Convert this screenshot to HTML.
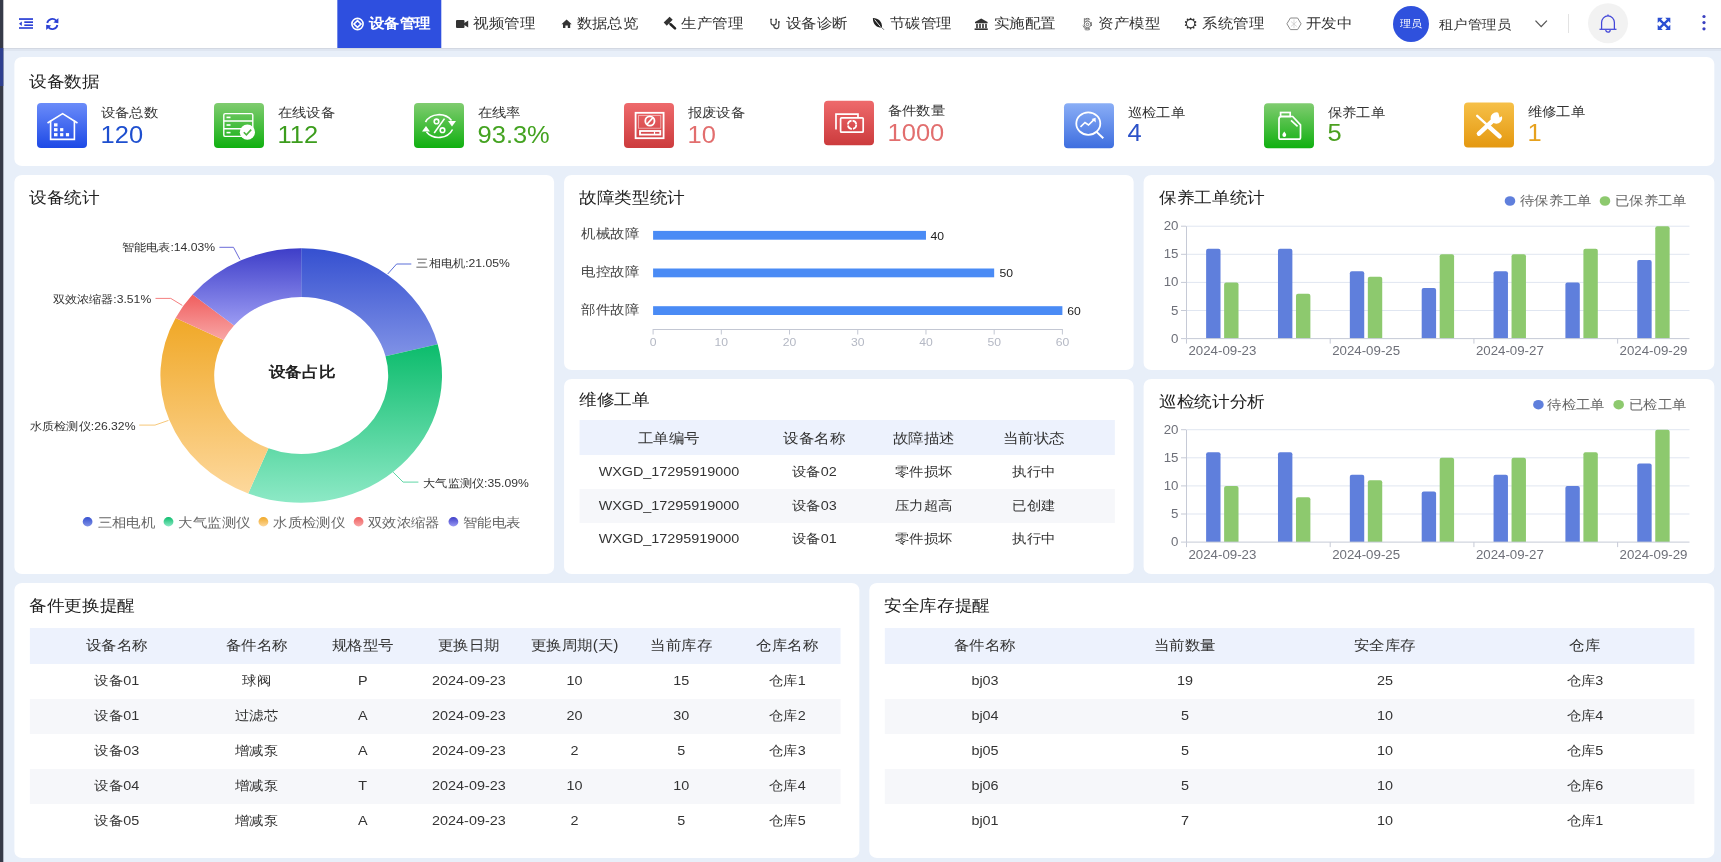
<!DOCTYPE html>
<html><head><meta charset="utf-8">
<style>
html,body{margin:0;padding:0;width:1721px;height:862px;overflow:hidden;background:#e8eff9;}
body{font-family:"Liberation Sans",sans-serif;color:#333;}
#root{position:absolute;left:0;top:0;width:1556.06px;height:862px;transform-origin:0 0;transform:scaleX(1.106);background:#e8eff9;}
.a{position:absolute;white-space:nowrap;}
.card{position:absolute;background:#fff;border-radius:7px;}
.ttl{position:absolute;font-size:16px;line-height:20px;color:#222;margin-top:0.5px;}
.c{text-align:center;}
#ov{position:absolute;left:0;top:0;}
.nav{font-size:14px;line-height:20px;color:#333;top:13px;}
.lab{font-size:13px;line-height:18px;color:#333;}
.num{font-size:23px;line-height:26px;}
.pl{font-size:11px;line-height:14px;color:#333;}
.lg{font-size:13px;line-height:16px;color:#666;}
.ax{font-size:11px;line-height:14px;color:#b4b8c4;}
.ax2{font-size:12px;line-height:14px;color:#6e7079;}
.th{font-size:14px;line-height:18px;color:#333;}
.td{font-size:13px;line-height:18px;color:#333;}
.fl{font-size:13px;line-height:18px;color:#444;}
.vl{font-size:11px;line-height:14px;color:#222;}
</style></head><body>
<div id="root">
<!-- header -->
<div class="a" style="left:0;top:0;width:1556.06px;height:48px;background:#fff;"></div>
<div class="a" style="left:0;top:48px;width:1556.06px;height:1px;background:#d3d8e2;"></div>
<div class="a" style="left:0;top:49px;width:1556.06px;height:2px;background:#dfe6f1;"></div>
<div class="a" style="left:304.70px;top:0;width:94.03px;height:48px;background:#2e4fdf;"></div>
<div class="a" style="left:0;top:0;width:3.44px;height:862px;background:#363a48;"></div>
<div class="a" style="left:0;top:48px;width:3.44px;height:38px;background:#2e3f8f;"></div>

<!-- cards -->
<div class="card" style="left:12.66px;top:57px;width:1537.07px;height:109px;"></div>
<div class="card" style="left:12.66px;top:175px;width:488.25px;height:399px;"></div>
<div class="card" style="left:509.95px;top:175px;width:515.37px;height:195px;"></div>
<div class="card" style="left:509.95px;top:379px;width:515.37px;height:195px;"></div>
<div class="card" style="left:1034.36px;top:175px;width:515.37px;height:195px;"></div>
<div class="card" style="left:1034.36px;top:379px;width:515.37px;height:195px;"></div>
<div class="card" style="left:12.66px;top:583px;width:764.01px;height:275px;"></div>
<div class="card" style="left:785.71px;top:583px;width:764.01px;height:275px;"></div>

<!-- titles -->
<div class="a ttl" style="left:26.22px;top:71px;">设备数据</div>
<div class="a ttl" style="left:26.22px;top:187px;">设备统计</div>
<div class="a ttl" style="left:523.51px;top:187px;">故障类型统计</div>
<div class="a ttl" style="left:1047.92px;top:187px;">保养工单统计</div>
<div class="a ttl" style="left:523.51px;top:389px;">维修工单</div>
<div class="a ttl" style="left:1047.92px;top:391px;">巡检统计分析</div>
<div class="a ttl" style="left:26.22px;top:595px;">备件更换提醒</div>
<div class="a ttl" style="left:799.28px;top:595px;">安全库存提醒</div>

<svg id="ov" width="1556.06" height="862" viewBox="0 0 1721 862" preserveAspectRatio="none" style="position:absolute;left:0;top:0">
<defs>
<linearGradient id="gBlue" x1="0" y1="0" x2="0" y2="1"><stop offset="0" stop-color="#6b8cf9"/><stop offset="1" stop-color="#1d49e6"/></linearGradient>
<linearGradient id="gGreen" x1="0" y1="0" x2="0" y2="1"><stop offset="0" stop-color="#80cc70"/><stop offset="1" stop-color="#10b010"/></linearGradient>
<linearGradient id="gRed" x1="0" y1="0" x2="0" y2="1"><stop offset="0" stop-color="#ee6a6c"/><stop offset="1" stop-color="#cc3b3d"/></linearGradient>
<linearGradient id="gBlue2" x1="0" y1="0" x2="0" y2="1"><stop offset="0" stop-color="#8aaef6"/><stop offset="1" stop-color="#3e6edf"/></linearGradient>
<linearGradient id="gOrange" x1="0" y1="0" x2="0" y2="1"><stop offset="0" stop-color="#f6c048"/><stop offset="1" stop-color="#e49810"/></linearGradient>
</defs>
<!-- header icons -->
<g fill="#2a3fd5">
<rect x="19" y="18.2" width="14" height="1.7"/>
<rect x="24.3" y="21.3" width="8.7" height="1.7"/>
<rect x="24.3" y="24.4" width="8.7" height="1.6"/>
<rect x="19" y="27.2" width="14" height="1.6"/>
<path d="M21.8 21.4 L19 23.7 L21.8 26 Z"/>
</g>
<g fill="none" stroke="#2a3fd5" stroke-width="1.8">
<path d="M47.2 23 A5.2 5.2 0 0 1 56.2 20.6"/>
<path d="M57.4 25 A5.2 5.2 0 0 1 48.4 27.4"/>
</g>
<g fill="#2a3fd5">
<path d="M58.4 18 L58.4 23.2 L53.4 22.6 Z"/>
<path d="M46.2 30 L46.2 24.8 L51.2 25.4 Z"/>
</g>
<!-- nav icons -->
<g fill="none" stroke="#fff" stroke-width="1.6">
<circle cx="357.5" cy="24" r="5.6"/>
<path d="M357.5 20.6 L361 24 L357.5 27.4 L354 24 Z"/>
</g>
<g fill="#333">
<rect x="456" y="20" width="8.5" height="8" rx="1"/>
<path d="M464 23.2 L468.2 20.4 L468.2 27.6 L464 24.8 Z"/>
<path d="M561.5 24.2 L566.6 19.6 L571.7 24.2 L570.2 24.2 L570.2 28 L567.8 28 L567.8 25.4 L565.4 25.4 L565.4 28 L563 28 L563 24.2 Z"/>
<path d="M672.7 19.8 L669.6 16.7 L663.7 22.6 L666.8 25.7 Z"/>
</g>
<path d="M670.6 24.3 L675 28.4" stroke="#222" stroke-width="2.6" stroke-linecap="round"/>
<path d="M669 22.6 L671.2 24.8" stroke="#222" stroke-width="1"/>
<g fill="#222">
<path d="M872.9 18 C878.5 18.3 882.3 21.5 882 27.6 C876.5 27.8 872.8 24.2 872.9 18 Z"/>
</g>
<path d="M874.6 19.5 L880.4 26.6" stroke="#fff" stroke-width="0.9"/>
<path d="M881.6 27.4 L884 29.8" stroke="#666" stroke-width="0.9"/>
<g fill="#333">
<path d="M975 22 L981.2 18.6 L987.6 22 L987.6 23.2 L975 23.2 Z"/>
<rect x="976.2" y="23.8" width="1.6" height="4.4"/><rect x="979.2" y="23.8" width="1.6" height="4.4"/><rect x="982.2" y="23.8" width="1.6" height="4.4"/><rect x="985.2" y="23.8" width="1.6" height="4.4"/>
<rect x="974.6" y="28.4" width="13.2" height="1.6"/>
</g>
<g fill="none" stroke="#444" stroke-width="1.2" stroke-linecap="round">
<path d="M771 19.4 L771 22.5 Q771 25 773.6 25.2 Q776.2 25 776.2 22.5 L776.2 19.4"/>
<path d="M773.6 25.2 Q774 28.5 776.5 28.6 Q778.8 28.5 778.8 26 L778.8 21.8"/>
</g>
<g fill="#444"><rect x="770.3" y="18.8" width="1.8" height="1.1"/><rect x="775.2" y="18.8" width="1.8" height="1.1"/><rect x="778" y="21.2" width="1.7" height="1.4"/></g>
<g fill="none" stroke="#666" stroke-width="0.9">
<ellipse cx="1087.4" cy="19.2" rx="2.3" ry="0.8"/>
<path d="M1084.4 18.2 L1084.4 22.5"/>
<circle cx="1087.5" cy="24.4" r="3.3"/>
<circle cx="1087.5" cy="24.4" r="1.3"/>
<ellipse cx="1087.4" cy="29.1" rx="2.6" ry="0.8"/>
<path d="M1083 25.5 L1084.8 28.4 M1091.2 22 L1091.5 26"/>
</g>
<g fill="none" stroke="#333" stroke-width="1.1">
<circle cx="1190.6" cy="23.6" r="4.2"/>
</g>
<g fill="#333">
<circle cx="1190.6" cy="18.6" r="0.9"/><circle cx="1193.6" cy="19.5" r="0.9"/><circle cx="1195.4" cy="22" r="0.9"/><circle cx="1195.4" cy="25.2" r="0.9"/><circle cx="1193.6" cy="27.7" r="0.9"/><circle cx="1190.6" cy="28.6" r="0.9"/><circle cx="1187.6" cy="27.7" r="0.9"/><circle cx="1185.8" cy="25.2" r="0.9"/><circle cx="1185.8" cy="22" r="0.9"/><circle cx="1187.6" cy="19.5" r="0.9"/>
</g>
<g fill="none" stroke="#8a8a8a" stroke-width="1">
<path d="M1290.4 18 L1297.6 18 L1301.1 23.8 L1297.6 29.6 L1290.4 29.6 L1286.9 23.8 Z"/>
</g>
<g fill="none" stroke="#c8c8c8" stroke-width="0.7">
<path d="M1291 21.5 L1296.8 26.5 M1296.8 21.5 L1291 26.5 M1294 19.5 L1294 28"/>
</g>
<!-- right header -->
<circle cx="1411" cy="24" r="18" fill="#2f51dd"/>
<path d="M1535.5 20.6 L1541.2 26.6 L1546.9 20.6" fill="none" stroke="#555" stroke-width="1.3"/>
<rect x="1568" y="14" width="1" height="19" fill="#e3e3e3"/>
<circle cx="1608" cy="23.2" r="20" fill="#f2f2f2"/>
<g fill="none" stroke="#4347d9" stroke-width="1.25">
<path d="M1601.6 29 L1601.6 22.5 A6.4 6.6 0 0 1 1614.4 22.5 L1614.4 29"/>
<path d="M1599.5 29.3 L1616.5 29.3"/>
<path d="M1605.8 30 A2.2 2.2 0 0 0 1610.2 30"/>
<path d="M1608 14.6 L1608 16"/>
</g>
<g fill="#2b4fd2">
<path d="M1657.7 17.8 L1662.8 17.8 L1657.7 22.9 Z"/>
<path d="M1670.3 17.8 L1670.3 22.9 L1665.2 17.8 Z"/>
<path d="M1657.7 29.9 L1657.7 24.8 L1662.8 29.9 Z"/>
<path d="M1670.3 29.9 L1665.2 29.9 L1670.3 24.8 Z"/>
</g>
<path d="M1659.5 19.6 L1668.5 28.1 M1668.5 19.6 L1659.5 28.1" stroke="#2b4fd2" stroke-width="2.3"/>
<g fill="#3a3fc0">
<circle cx="1704" cy="16.5" r="1.6"/><circle cx="1704" cy="22.6" r="1.6"/><circle cx="1704" cy="28.8" r="1.6"/>
</g>

<rect x="37" y="103" width="50" height="45" rx="4" fill="url(#gBlue)"/>
<rect x="214" y="103" width="50" height="45" rx="4" fill="url(#gGreen)"/>
<rect x="414" y="103" width="50" height="45" rx="4" fill="url(#gGreen)"/>
<rect x="624" y="103" width="50" height="45" rx="4" fill="url(#gRed)"/>
<rect x="824" y="100.7" width="50" height="44.5" rx="4" fill="url(#gRed)"/>
<rect x="1064" y="103.3" width="50" height="45" rx="4" fill="url(#gBlue2)"/>
<rect x="1264" y="103.3" width="50" height="45" rx="4" fill="url(#gGreen)"/>
<rect x="1464" y="102.5" width="50" height="45" rx="4" fill="url(#gOrange)"/>
<!-- icon1 house -->
<g fill="none" stroke="#fff" stroke-width="1.6" stroke-linejoin="miter">
<path d="M47.5 123 L62.6 113.6 L77.5 123"/>
<path d="M50.6 120.6 L50.6 139.4 L74.4 139.4 L74.4 120.6"/>
</g>
<g fill="#fff">
<rect x="54" y="123.3" width="3.5" height="3.2"/><rect x="54" y="128.1" width="3.5" height="3.2"/><rect x="54" y="133.1" width="3.5" height="3.2"/>
<rect x="60.1" y="128.1" width="3.2" height="3.2"/><rect x="60.1" y="133.1" width="3.2" height="3.2"/>
<rect x="65.9" y="133.1" width="3.2" height="3.2"/>
</g>
<!-- icon2 server check -->
<g fill="none" stroke="#fff" stroke-width="1.4">
<rect x="223.8" y="113.6" width="29" height="22.8" rx="1.5"/>
<path d="M223.8 121 L252.8 121 M223.8 128.8 L252.8 128.8"/>
</g>
<g fill="#fff"><rect x="226.5" y="116.6" width="4" height="1.6"/><rect x="226.5" y="124.2" width="4" height="1.6"/><rect x="226.5" y="131.8" width="4" height="1.6"/></g>
<circle cx="247.4" cy="132.2" r="7.6" fill="#fff"/>
<circle cx="247.4" cy="132.2" r="6.4" fill="#fff" stroke="#5fbf50" stroke-width="0"/>
<path d="M243.8 132.3 L246.4 134.9 L251.2 129.6" fill="none" stroke="#4fb440" stroke-width="1.6"/>
<!-- icon3 percent cycle -->
<g fill="none" stroke="#fff" stroke-width="1.6">
<path d="M425.5 122 A15 13 0 0 1 451.5 120.5"/>
<path d="M452.5 129.5 A15 13 0 0 1 426.5 132"/>
<circle cx="436.5" cy="121.4" r="2.3"/><circle cx="442.5" cy="130.2" r="2.3"/>
<path d="M444.5 118.6 L434.2 133"/>
</g>
<g fill="#fff">
<path d="M448 121 L456 121 L452 126.5 Z"/>
<path d="M422 131.5 L430 131.5 L426 126 Z"/>
</g>
<!-- icon4 scrap -->
<g fill="none" stroke="#fff" stroke-width="1.8">
<rect x="635.6" y="112.8" width="28" height="25.4"/>
<circle cx="649.9" cy="121" r="4.6"/>
<path d="M652.6 118 L647.2 124"/>
<rect x="640" y="131" width="20.3" height="3.6"/>
</g>
<rect x="638.4" y="115.6" width="22.4" height="12.6" fill="none" stroke="#fff" stroke-width="0.8" opacity="0.6"/>
<path d="M654.5 131.5 L654.5 134" stroke="#fff" stroke-width="1.2"/>
<!-- icon5 spare -->
<g fill="none" stroke="#fff" stroke-width="1.7">
<path d="M836 129.5 L836 114.2 L858 114.2 L858 117"/>
<rect x="840.6" y="117.8" width="22.6" height="14.4" rx="1"/>
<circle cx="852.1" cy="124.8" r="4.2" stroke-dasharray="5.5 1.1"/>
</g>
<!-- icon6 search trend -->
<g fill="none" stroke="#fff" stroke-width="1.8">
<ellipse cx="1088.3" cy="123.6" rx="12" ry="11.2"/>
<path d="M1096.3 131.6 L1103.3 138.3" stroke-width="2"/>
<path d="M1080.5 126.8 L1085 122.5 L1088.5 125 L1094 119.6" stroke-width="1.6"/>
</g>
<path d="M1095.6 117.8 L1095.8 122.4 L1091.6 119 Z" fill="#fff"/>
<!-- icon7 jerrycan -->
<g fill="none" stroke="#fff" stroke-width="1.7">
<path d="M1279 122 L1279 137.5 Q1279 139.2 1280.8 139.2 L1298.8 139.2 Q1300.5 139.2 1300.5 137.5 L1300.5 124.8 L1292.7 116.5 L1281.4 116.5 Q1279 116.5 1279 119 Z"/>
<rect x="1280.6" y="112.5" width="9.6" height="4"/>
<path d="M1291 120.4 L1297.6 126.3"/>
</g>
<path d="M1284.3 131.6 Q1286.2 134 1286.2 135 A1.9 1.9 0 0 1 1282.4 135 Q1282.4 134 1284.3 131.6 Z" fill="#fff"/>
<!-- icon8 tools -->
<g stroke="#fff" stroke-linecap="round" fill="none">
<path d="M1477.2 115.8 L1486 123.8" stroke-width="2.4"/>
<path d="M1489.6 127.4 L1499.6 136.4" stroke-width="4.4"/>
<path d="M1479 133.6 L1492.6 120.8" stroke-width="4.6"/>
</g>
<mask id="wm" maskUnits="userSpaceOnUse" x="1480" y="100" width="40" height="40"><rect x="1480" y="100" width="40" height="40" fill="#fff"/><path d="M1497.6 110 L1499.6 117.4 L1508 113 L1506 106 Z" fill="#000"/></mask>
<circle cx="1496.4" cy="118" r="5.8" fill="#fff" mask="url(#wm)"/>
<!--CHARTS_BEGIN-->
<defs><linearGradient id="pg0" x1="0" y1="0" x2="0" y2="1"><stop offset="0" stop-color="#3550d0"/><stop offset="1" stop-color="#8092e6"/></linearGradient><linearGradient id="pg1" x1="0" y1="0" x2="0" y2="1"><stop offset="0" stop-color="#0cbc6c"/><stop offset="1" stop-color="#8de9c6"/></linearGradient><linearGradient id="pg2" x1="0" y1="0" x2="0" y2="1"><stop offset="0" stop-color="#f0a827"/><stop offset="1" stop-color="#fdd89c"/></linearGradient><linearGradient id="pg3" x1="0" y1="0" x2="0" y2="1"><stop offset="0" stop-color="#f05e5e"/><stop offset="1" stop-color="#f8a6a6"/></linearGradient><linearGradient id="pg4" x1="0" y1="0" x2="0" y2="1"><stop offset="0" stop-color="#3e3ec8"/><stop offset="1" stop-color="#9b9bf3"/></linearGradient></defs>
<path d="M301.20 248.20 A140.8 127.3 0 0 1 437.69 344.23 L385.53 356.19 A87.0 78.6 0 0 0 301.20 296.90 Z" fill="url(#pg0)" />
<path d="M437.69 344.23 A140.8 127.3 0 0 1 248.22 493.44 L268.46 448.32 A87.0 78.6 0 0 0 385.53 356.19 Z" fill="url(#pg1)" />
<path d="M248.22 493.44 A140.8 127.3 0 0 1 175.59 317.99 L223.58 339.99 A87.0 78.6 0 0 0 268.46 448.32 Z" fill="url(#pg2)" />
<path d="M175.59 317.99 A140.8 127.3 0 0 1 192.54 294.54 L234.06 325.51 A87.0 78.6 0 0 0 223.58 339.99 Z" fill="url(#pg3)" />
<path d="M192.54 294.54 A140.8 127.3 0 0 1 301.20 248.20 L301.20 296.90 A87.0 78.6 0 0 0 234.06 325.51 Z" fill="url(#pg4)" />
<polyline points="387.7,274 396.6,264 411.3,264" fill="none" stroke="#5a6fd8" stroke-width="1"/>
<polyline points="393.2,472.2 403.1,482.1 418.4,482.1" fill="none" stroke="#5fd6a6" stroke-width="1"/>
<polyline points="168.5,420.4 155,425.1 139.2,425.1" fill="none" stroke="#f6c778" stroke-width="1"/>
<polyline points="182.3,305.4 170.8,298.4 155.5,298.4" fill="none" stroke="#f48080" stroke-width="1"/>
<polyline points="239.9,259.4 233.5,247.3 219.4,247.3" fill="none" stroke="#6a6ad8" stroke-width="1"/>
<ellipse cx="87.6" cy="521.7" rx="4.9" ry="4.7" fill="url(#pg0)"/>
<ellipse cx="168.5" cy="521.7" rx="4.9" ry="4.7" fill="url(#pg1)"/>
<ellipse cx="263.4" cy="521.7" rx="4.9" ry="4.7" fill="url(#pg2)"/>
<ellipse cx="358.6" cy="521.7" rx="4.9" ry="4.7" fill="url(#pg3)"/>
<ellipse cx="453.4" cy="521.7" rx="4.9" ry="4.7" fill="url(#pg4)"/>
<rect x="653.1" y="230.90" width="272.87" height="8.8" fill="#4a8bf5"/>
<rect x="653.1" y="268.50" width="341.08" height="8.8" fill="#4a8bf5"/>
<rect x="653.1" y="306.20" width="409.30" height="8.8" fill="#4a8bf5"/>
<rect x="653.1" y="329" width="409.30" height="1" fill="#c3c7d3"/>
<rect x="652.60" y="329" width="1" height="5.5" fill="#c3c7d3"/>
<rect x="720.82" y="329" width="1" height="5.5" fill="#c3c7d3"/>
<rect x="789.03" y="329" width="1" height="5.5" fill="#c3c7d3"/>
<rect x="857.25" y="329" width="1" height="5.5" fill="#c3c7d3"/>
<rect x="925.47" y="329" width="1" height="5.5" fill="#c3c7d3"/>
<rect x="993.68" y="329" width="1" height="5.5" fill="#c3c7d3"/>
<rect x="1061.90" y="329" width="1" height="5.5" fill="#c3c7d3"/>
<rect x="1186.5" y="310.00" width="503.0" height="1" fill="#e0e6f1"/>
<rect x="1186.5" y="281.90" width="503.0" height="1" fill="#e0e6f1"/>
<rect x="1186.5" y="253.80" width="503.0" height="1" fill="#e0e6f1"/>
<rect x="1186.5" y="225.70" width="503.0" height="1" fill="#e0e6f1"/>
<rect x="1186.0" y="226.20" width="1" height="112.40" fill="#c6cad6"/>
<rect x="1181.0" y="338.10" width="5" height="1" fill="#c6cad6"/>
<rect x="1181.0" y="310.00" width="5" height="1" fill="#c6cad6"/>
<rect x="1181.0" y="281.90" width="5" height="1" fill="#c6cad6"/>
<rect x="1181.0" y="253.80" width="5" height="1" fill="#c6cad6"/>
<rect x="1181.0" y="225.70" width="5" height="1" fill="#c6cad6"/>
<path d="M1206.13 338.60 L1206.13 250.68 Q1206.13 248.68 1208.13 248.68 L1218.53 248.68 Q1220.53 248.68 1220.53 250.68 L1220.53 338.60 Z" fill="#5f7fdc"/>
<path d="M1224.13 338.60 L1224.13 284.40 Q1224.13 282.40 1226.13 282.40 L1236.53 282.40 Q1238.53 282.40 1238.53 284.40 L1238.53 338.60 Z" fill="#8dc96e"/>
<path d="M1277.99 338.60 L1277.99 250.68 Q1277.99 248.68 1279.99 248.68 L1290.39 248.68 Q1292.39 248.68 1292.39 250.68 L1292.39 338.60 Z" fill="#5f7fdc"/>
<path d="M1295.99 338.60 L1295.99 295.64 Q1295.99 293.64 1297.99 293.64 L1308.39 293.64 Q1310.39 293.64 1310.39 295.64 L1310.39 338.60 Z" fill="#8dc96e"/>
<path d="M1349.84 338.60 L1349.84 273.16 Q1349.84 271.16 1351.84 271.16 L1362.24 271.16 Q1364.24 271.16 1364.24 273.16 L1364.24 338.60 Z" fill="#5f7fdc"/>
<path d="M1367.84 338.60 L1367.84 278.78 Q1367.84 276.78 1369.84 276.78 L1380.24 276.78 Q1382.24 276.78 1382.24 278.78 L1382.24 338.60 Z" fill="#8dc96e"/>
<path d="M1421.70 338.60 L1421.70 290.02 Q1421.70 288.02 1423.70 288.02 L1434.10 288.02 Q1436.10 288.02 1436.10 290.02 L1436.10 338.60 Z" fill="#5f7fdc"/>
<path d="M1439.70 338.60 L1439.70 256.30 Q1439.70 254.30 1441.70 254.30 L1452.10 254.30 Q1454.10 254.30 1454.10 256.30 L1454.10 338.60 Z" fill="#8dc96e"/>
<path d="M1493.56 338.60 L1493.56 273.16 Q1493.56 271.16 1495.56 271.16 L1505.96 271.16 Q1507.96 271.16 1507.96 273.16 L1507.96 338.60 Z" fill="#5f7fdc"/>
<path d="M1511.56 338.60 L1511.56 256.30 Q1511.56 254.30 1513.56 254.30 L1523.96 254.30 Q1525.96 254.30 1525.96 256.30 L1525.96 338.60 Z" fill="#8dc96e"/>
<path d="M1565.41 338.60 L1565.41 284.40 Q1565.41 282.40 1567.41 282.40 L1577.81 282.40 Q1579.81 282.40 1579.81 284.40 L1579.81 338.60 Z" fill="#5f7fdc"/>
<path d="M1583.41 338.60 L1583.41 250.68 Q1583.41 248.68 1585.41 248.68 L1595.81 248.68 Q1597.81 248.68 1597.81 250.68 L1597.81 338.60 Z" fill="#8dc96e"/>
<path d="M1637.27 338.60 L1637.27 261.92 Q1637.27 259.92 1639.27 259.92 L1649.67 259.92 Q1651.67 259.92 1651.67 261.92 L1651.67 338.60 Z" fill="#5f7fdc"/>
<path d="M1655.27 338.60 L1655.27 228.20 Q1655.27 226.20 1657.27 226.20 L1667.67 226.20 Q1669.67 226.20 1669.67 228.20 L1669.67 338.60 Z" fill="#8dc96e"/>
<rect x="1186.5" y="338.10" width="503.0" height="1" fill="#c6cad6"/>
<rect x="1186.00" y="338.60" width="1" height="5" fill="#c6cad6"/>
<rect x="1329.71" y="338.60" width="1" height="5" fill="#c6cad6"/>
<rect x="1473.43" y="338.60" width="1" height="5" fill="#c6cad6"/>
<rect x="1617.14" y="338.60" width="1" height="5" fill="#c6cad6"/>
<rect x="1186.5" y="513.50" width="503.0" height="1" fill="#e0e6f1"/>
<rect x="1186.5" y="485.40" width="503.0" height="1" fill="#e0e6f1"/>
<rect x="1186.5" y="457.30" width="503.0" height="1" fill="#e0e6f1"/>
<rect x="1186.5" y="429.20" width="503.0" height="1" fill="#e0e6f1"/>
<rect x="1186.0" y="429.70" width="1" height="112.40" fill="#c6cad6"/>
<rect x="1181.0" y="541.60" width="5" height="1" fill="#c6cad6"/>
<rect x="1181.0" y="513.50" width="5" height="1" fill="#c6cad6"/>
<rect x="1181.0" y="485.40" width="5" height="1" fill="#c6cad6"/>
<rect x="1181.0" y="457.30" width="5" height="1" fill="#c6cad6"/>
<rect x="1181.0" y="429.20" width="5" height="1" fill="#c6cad6"/>
<path d="M1206.13 542.10 L1206.13 454.18 Q1206.13 452.18 1208.13 452.18 L1218.53 452.18 Q1220.53 452.18 1220.53 454.18 L1220.53 542.10 Z" fill="#5f7fdc"/>
<path d="M1224.13 542.10 L1224.13 487.90 Q1224.13 485.90 1226.13 485.90 L1236.53 485.90 Q1238.53 485.90 1238.53 487.90 L1238.53 542.10 Z" fill="#8dc96e"/>
<path d="M1277.99 542.10 L1277.99 454.18 Q1277.99 452.18 1279.99 452.18 L1290.39 452.18 Q1292.39 452.18 1292.39 454.18 L1292.39 542.10 Z" fill="#5f7fdc"/>
<path d="M1295.99 542.10 L1295.99 499.14 Q1295.99 497.14 1297.99 497.14 L1308.39 497.14 Q1310.39 497.14 1310.39 499.14 L1310.39 542.10 Z" fill="#8dc96e"/>
<path d="M1349.84 542.10 L1349.84 476.66 Q1349.84 474.66 1351.84 474.66 L1362.24 474.66 Q1364.24 474.66 1364.24 476.66 L1364.24 542.10 Z" fill="#5f7fdc"/>
<path d="M1367.84 542.10 L1367.84 482.28 Q1367.84 480.28 1369.84 480.28 L1380.24 480.28 Q1382.24 480.28 1382.24 482.28 L1382.24 542.10 Z" fill="#8dc96e"/>
<path d="M1421.70 542.10 L1421.70 493.52 Q1421.70 491.52 1423.70 491.52 L1434.10 491.52 Q1436.10 491.52 1436.10 493.52 L1436.10 542.10 Z" fill="#5f7fdc"/>
<path d="M1439.70 542.10 L1439.70 459.80 Q1439.70 457.80 1441.70 457.80 L1452.10 457.80 Q1454.10 457.80 1454.10 459.80 L1454.10 542.10 Z" fill="#8dc96e"/>
<path d="M1493.56 542.10 L1493.56 476.66 Q1493.56 474.66 1495.56 474.66 L1505.96 474.66 Q1507.96 474.66 1507.96 476.66 L1507.96 542.10 Z" fill="#5f7fdc"/>
<path d="M1511.56 542.10 L1511.56 459.80 Q1511.56 457.80 1513.56 457.80 L1523.96 457.80 Q1525.96 457.80 1525.96 459.80 L1525.96 542.10 Z" fill="#8dc96e"/>
<path d="M1565.41 542.10 L1565.41 487.90 Q1565.41 485.90 1567.41 485.90 L1577.81 485.90 Q1579.81 485.90 1579.81 487.90 L1579.81 542.10 Z" fill="#5f7fdc"/>
<path d="M1583.41 542.10 L1583.41 454.18 Q1583.41 452.18 1585.41 452.18 L1595.81 452.18 Q1597.81 452.18 1597.81 454.18 L1597.81 542.10 Z" fill="#8dc96e"/>
<path d="M1637.27 542.10 L1637.27 465.42 Q1637.27 463.42 1639.27 463.42 L1649.67 463.42 Q1651.67 463.42 1651.67 465.42 L1651.67 542.10 Z" fill="#5f7fdc"/>
<path d="M1655.27 542.10 L1655.27 431.70 Q1655.27 429.70 1657.27 429.70 L1667.67 429.70 Q1669.67 429.70 1669.67 431.70 L1669.67 542.10 Z" fill="#8dc96e"/>
<rect x="1186.5" y="541.60" width="503.0" height="1" fill="#c6cad6"/>
<rect x="1186.00" y="542.10" width="1" height="5" fill="#c6cad6"/>
<rect x="1329.71" y="542.10" width="1" height="5" fill="#c6cad6"/>
<rect x="1473.43" y="542.10" width="1" height="5" fill="#c6cad6"/>
<rect x="1617.14" y="542.10" width="1" height="5" fill="#c6cad6"/>
<ellipse cx="1510" cy="201" rx="5.3" ry="4.8" fill="#5f7fdc"/>
<ellipse cx="1605" cy="201" rx="5.3" ry="4.8" fill="#8dc96e"/>
<ellipse cx="1538.4" cy="404.7" rx="5.3" ry="4.8" fill="#5f7fdc"/>
<ellipse cx="1618.7" cy="404.7" rx="5.3" ry="4.8" fill="#8dc96e"/>
<!--CHARTS_END-->
</svg>

<div class="a nav" style="left:333.63px;color:#fff;font-weight:bold;">设备管理</div>
<div class="a nav" style="left:428.12px;">视频管理</div>
<div class="a nav" style="left:521.25px;">数据总览</div>
<div class="a nav" style="left:616.18px;">生产管理</div>
<div class="a nav" style="left:710.67px;">设备诊断</div>
<div class="a nav" style="left:804.70px;">节碳管理</div>
<div class="a nav" style="left:898.73px;">实施配置</div>
<div class="a nav" style="left:992.95px;">资产模型</div>
<div class="a nav" style="left:1087.07px;">系统管理</div>
<div class="a nav" style="left:1180.65px;">开发中</div>
<div class="a" style="left:1259.49px;top:16px;width:32.55px;text-align:center;font-size:10px;line-height:16px;color:#fff;">理员</div>
<div class="a" style="left:1301.08px;top:15px;font-size:13px;line-height:20px;color:#333;">租户管理员</div>
<div class="a lab" style="left:90.96px;top:104px;">设备总数</div>
<div class="a num" style="left:90.96px;top:122px;color:#1e4fcf;">120</div>
<div class="a lab" style="left:250.99px;top:104px;">在线设备</div>
<div class="a num" style="left:250.99px;top:122px;color:#3c9d1d;">112</div>
<div class="a lab" style="left:431.83px;top:104px;">在线率</div>
<div class="a num" style="left:431.83px;top:122px;color:#44a321;">93.3%</div>
<div class="a lab" style="left:621.70px;top:104px;">报废设备</div>
<div class="a num" style="left:621.70px;top:122px;color:#e26e6e;">10</div>
<div class="a lab" style="left:802.53px;top:101.5px;">备件数量</div>
<div class="a num" style="left:802.53px;top:119.5px;color:#e26e6e;">1000</div>
<div class="a lab" style="left:1019.53px;top:104px;">巡检工单</div>
<div class="a num" style="left:1019.53px;top:120.2px;color:#2c52c8;">4</div>
<div class="a lab" style="left:1200.36px;top:104px;">保养工单</div>
<div class="a num" style="left:1200.36px;top:120.2px;color:#4ba020;">5</div>
<div class="a lab" style="left:1381.19px;top:103px;">维修工单</div>
<div class="a num" style="left:1381.19px;top:120.2px;color:#e6a11e;">1</div>
<!--TEXT3_BEGIN-->
<div class="a pl" style="left:376.58px;top:256.4px;">三相电机:21.05%</div>
<div class="a pl" style="left:382.73px;top:475.8px;">大气监测仪:35.09%</div>
<div class="a pl" style="left:27.12px;top:419.0px;">水质检测仪:26.32%</div>
<div class="a pl" style="left:47.47px;top:292.2px;">双效浓缩器:3.51%</div>
<div class="a pl" style="left:110.13px;top:240.4px;">智能电表:14.03%</div>
<div class="a  c" style="left:218.81px;width:108.50px;top:363px;font-size:15px;line-height:18px;font-weight:bold;color:#222;">设备占比</div>
<div class="a lg" style="left:88.16px;top:515px;">三相电机</div>
<div class="a lg" style="left:161.30px;top:515px;">大气监测仪</div>
<div class="a lg" style="left:247.11px;top:515px;">水质检测仪</div>
<div class="a lg" style="left:332.64px;top:515px;">双效浓缩器</div>
<div class="a lg" style="left:418.72px;top:515px;">智能电表</div>
<div class="a fl" style="left:505.42px;width:72.33px;text-align:right;top:224.5px;">机械故障</div>
<div class="a fl" style="left:505.42px;width:72.33px;text-align:right;top:263px;">电控故障</div>
<div class="a fl" style="left:505.42px;width:72.33px;text-align:right;top:300.7px;">部件故障</div>
<div class="a vl" style="left:841.41px;top:229px;">40</div>
<div class="a vl" style="left:903.71px;top:266px;">50</div>
<div class="a vl" style="left:964.92px;top:303.5px;">60</div>
<div class="a ax c" style="left:572.42px;width:36.17px;top:335px;">0</div>
<div class="a ax c" style="left:634.10px;width:36.17px;top:335px;">10</div>
<div class="a ax c" style="left:695.78px;width:36.17px;top:335px;">20</div>
<div class="a ax c" style="left:757.46px;width:36.17px;top:335px;">30</div>
<div class="a ax c" style="left:819.14px;width:36.17px;top:335px;">40</div>
<div class="a ax c" style="left:880.82px;width:36.17px;top:335px;">50</div>
<div class="a ax c" style="left:942.50px;width:36.17px;top:335px;">60</div>
<div class="a ax2" style="left:1038.43px;width:27.12px;text-align:right;top:331.6px;">0</div>
<div class="a ax2" style="left:1038.43px;width:27.12px;text-align:right;top:303.5px;">5</div>
<div class="a ax2" style="left:1038.43px;width:27.12px;text-align:right;top:275.4px;">10</div>
<div class="a ax2" style="left:1038.43px;width:27.12px;text-align:right;top:247.3px;">15</div>
<div class="a ax2" style="left:1038.43px;width:27.12px;text-align:right;top:219.2px;">20</div>
<div class="a ax2 c" style="left:1064.58px;width:81.37px;top:344.2px;">2024-09-23</div>
<div class="a ax2 c" style="left:1194.52px;width:81.37px;top:344.2px;">2024-09-25</div>
<div class="a ax2 c" style="left:1324.46px;width:81.37px;top:344.2px;">2024-09-27</div>
<div class="a ax2 c" style="left:1454.40px;width:81.37px;top:344.2px;">2024-09-29</div>
<div class="a lg" style="left:1374.14px;top:193px;">待保养工单</div>
<div class="a lg" style="left:1460.04px;top:193px;">已保养工单</div>
<div class="a ax2" style="left:1038.43px;width:27.12px;text-align:right;top:535.1px;">0</div>
<div class="a ax2" style="left:1038.43px;width:27.12px;text-align:right;top:507.0px;">5</div>
<div class="a ax2" style="left:1038.43px;width:27.12px;text-align:right;top:478.9px;">10</div>
<div class="a ax2" style="left:1038.43px;width:27.12px;text-align:right;top:450.8px;">15</div>
<div class="a ax2" style="left:1038.43px;width:27.12px;text-align:right;top:422.7px;">20</div>
<div class="a ax2 c" style="left:1064.58px;width:81.37px;top:547.7px;">2024-09-23</div>
<div class="a ax2 c" style="left:1194.52px;width:81.37px;top:547.7px;">2024-09-25</div>
<div class="a ax2 c" style="left:1324.46px;width:81.37px;top:547.7px;">2024-09-27</div>
<div class="a ax2 c" style="left:1454.40px;width:81.37px;top:547.7px;">2024-09-29</div>
<div class="a lg" style="left:1399.01px;top:396.7px;">待检工单</div>
<div class="a lg" style="left:1472.88px;top:396.7px;">已检工单</div>
<div class="a" style="left:523.69px;top:420px;width:483.91px;height:35px;background:#edf2fd;"></div>
<div class="a" style="left:523.69px;top:489px;width:483.91px;height:33.7px;background:#f6f7fa;"></div>
<div class="a th c" style="left:537.07px;width:135.62px;top:428.8px;">工单编号</div>
<div class="a th c" style="left:668.44px;width:135.62px;top:428.8px;">设备名称</div>
<div class="a th c" style="left:767.36px;width:135.62px;top:428.8px;">故障描述</div>
<div class="a th c" style="left:867.09px;width:135.62px;top:428.8px;">当前状态</div>
<div class="a td c" style="left:537.07px;width:135.62px;top:463.2px;">WXGD_17295919000</div>
<div class="a td c" style="left:668.44px;width:135.62px;top:463.2px;">设备02</div>
<div class="a td c" style="left:767.36px;width:135.62px;top:463.2px;">零件损坏</div>
<div class="a td c" style="left:867.09px;width:135.62px;top:463.2px;">执行中</div>
<div class="a td c" style="left:537.07px;width:135.62px;top:496.9px;">WXGD_17295919000</div>
<div class="a td c" style="left:668.44px;width:135.62px;top:496.9px;">设备03</div>
<div class="a td c" style="left:767.36px;width:135.62px;top:496.9px;">压力超高</div>
<div class="a td c" style="left:867.09px;width:135.62px;top:496.9px;">已创建</div>
<div class="a td c" style="left:537.07px;width:135.62px;top:530.2px;">WXGD_17295919000</div>
<div class="a td c" style="left:668.44px;width:135.62px;top:530.2px;">设备01</div>
<div class="a td c" style="left:767.36px;width:135.62px;top:530.2px;">零件损坏</div>
<div class="a td c" style="left:867.09px;width:135.62px;top:530.2px;">执行中</div>
<div class="a" style="left:27.40px;top:628px;width:732.37px;height:35.5px;background:#edf2fd;"></div>
<div class="a" style="left:27.40px;top:698.7px;width:732.37px;height:35px;background:#f6f7fa;"></div>
<div class="a" style="left:27.40px;top:768.7px;width:732.37px;height:35px;background:#f6f7fa;"></div>
<div class="a th c" style="left:51.36px;width:108.50px;top:636px;">设备名称</div>
<div class="a th c" style="left:177.76px;width:108.50px;top:636px;">备件名称</div>
<div class="a th c" style="left:273.69px;width:108.50px;top:636px;">规格型号</div>
<div class="a th c" style="left:369.71px;width:108.50px;top:636px;">更换日期</div>
<div class="a th c" style="left:465.28px;width:108.50px;top:636px;">更换周期(天)</div>
<div class="a th c" style="left:561.66px;width:108.50px;top:636px;">当前库存</div>
<div class="a th c" style="left:657.69px;width:108.50px;top:636px;">仓库名称</div>
<div class="a td c" style="left:51.36px;width:108.50px;top:672.2px;">设备01</div>
<div class="a td c" style="left:177.76px;width:108.50px;top:672.2px;">球阀</div>
<div class="a td c" style="left:273.69px;width:108.50px;top:672.2px;">P</div>
<div class="a td c" style="left:369.71px;width:108.50px;top:672.2px;">2024-09-23</div>
<div class="a td c" style="left:465.28px;width:108.50px;top:672.2px;">10</div>
<div class="a td c" style="left:561.66px;width:108.50px;top:672.2px;">15</div>
<div class="a td c" style="left:657.69px;width:108.50px;top:672.2px;">仓库1</div>
<div class="a td c" style="left:51.36px;width:108.50px;top:707.2px;">设备01</div>
<div class="a td c" style="left:177.76px;width:108.50px;top:707.2px;">过滤芯</div>
<div class="a td c" style="left:273.69px;width:108.50px;top:707.2px;">A</div>
<div class="a td c" style="left:369.71px;width:108.50px;top:707.2px;">2024-09-23</div>
<div class="a td c" style="left:465.28px;width:108.50px;top:707.2px;">20</div>
<div class="a td c" style="left:561.66px;width:108.50px;top:707.2px;">30</div>
<div class="a td c" style="left:657.69px;width:108.50px;top:707.2px;">仓库2</div>
<div class="a td c" style="left:51.36px;width:108.50px;top:742.2px;">设备03</div>
<div class="a td c" style="left:177.76px;width:108.50px;top:742.2px;">增减泵</div>
<div class="a td c" style="left:273.69px;width:108.50px;top:742.2px;">A</div>
<div class="a td c" style="left:369.71px;width:108.50px;top:742.2px;">2024-09-23</div>
<div class="a td c" style="left:465.28px;width:108.50px;top:742.2px;">2</div>
<div class="a td c" style="left:561.66px;width:108.50px;top:742.2px;">5</div>
<div class="a td c" style="left:657.69px;width:108.50px;top:742.2px;">仓库3</div>
<div class="a td c" style="left:51.36px;width:108.50px;top:777.2px;">设备04</div>
<div class="a td c" style="left:177.76px;width:108.50px;top:777.2px;">增减泵</div>
<div class="a td c" style="left:273.69px;width:108.50px;top:777.2px;">T</div>
<div class="a td c" style="left:369.71px;width:108.50px;top:777.2px;">2024-09-23</div>
<div class="a td c" style="left:465.28px;width:108.50px;top:777.2px;">10</div>
<div class="a td c" style="left:561.66px;width:108.50px;top:777.2px;">10</div>
<div class="a td c" style="left:657.69px;width:108.50px;top:777.2px;">仓库4</div>
<div class="a td c" style="left:51.36px;width:108.50px;top:812.2px;">设备05</div>
<div class="a td c" style="left:177.76px;width:108.50px;top:812.2px;">增减泵</div>
<div class="a td c" style="left:273.69px;width:108.50px;top:812.2px;">A</div>
<div class="a td c" style="left:369.71px;width:108.50px;top:812.2px;">2024-09-23</div>
<div class="a td c" style="left:465.28px;width:108.50px;top:812.2px;">2</div>
<div class="a td c" style="left:561.66px;width:108.50px;top:812.2px;">5</div>
<div class="a td c" style="left:657.69px;width:108.50px;top:812.2px;">仓库5</div>
<div class="a" style="left:800.18px;top:628px;width:731.92px;height:35.5px;background:#edf2fd;"></div>
<div class="a" style="left:800.18px;top:698.7px;width:731.92px;height:35px;background:#f6f7fa;"></div>
<div class="a" style="left:800.18px;top:768.7px;width:731.92px;height:35px;background:#f6f7fa;"></div>
<div class="a th c" style="left:822.78px;width:135.62px;top:636px;">备件名称</div>
<div class="a th c" style="left:1003.62px;width:135.62px;top:636px;">当前数量</div>
<div class="a th c" style="left:1184.45px;width:135.62px;top:636px;">安全库存</div>
<div class="a th c" style="left:1365.28px;width:135.62px;top:636px;">仓库</div>
<div class="a td c" style="left:822.78px;width:135.62px;top:672.2px;">bj03</div>
<div class="a td c" style="left:1003.62px;width:135.62px;top:672.2px;">19</div>
<div class="a td c" style="left:1184.45px;width:135.62px;top:672.2px;">25</div>
<div class="a td c" style="left:1365.28px;width:135.62px;top:672.2px;">仓库3</div>
<div class="a td c" style="left:822.78px;width:135.62px;top:707.2px;">bj04</div>
<div class="a td c" style="left:1003.62px;width:135.62px;top:707.2px;">5</div>
<div class="a td c" style="left:1184.45px;width:135.62px;top:707.2px;">10</div>
<div class="a td c" style="left:1365.28px;width:135.62px;top:707.2px;">仓库4</div>
<div class="a td c" style="left:822.78px;width:135.62px;top:742.2px;">bj05</div>
<div class="a td c" style="left:1003.62px;width:135.62px;top:742.2px;">5</div>
<div class="a td c" style="left:1184.45px;width:135.62px;top:742.2px;">10</div>
<div class="a td c" style="left:1365.28px;width:135.62px;top:742.2px;">仓库5</div>
<div class="a td c" style="left:822.78px;width:135.62px;top:777.2px;">bj06</div>
<div class="a td c" style="left:1003.62px;width:135.62px;top:777.2px;">5</div>
<div class="a td c" style="left:1184.45px;width:135.62px;top:777.2px;">10</div>
<div class="a td c" style="left:1365.28px;width:135.62px;top:777.2px;">仓库6</div>
<div class="a td c" style="left:822.78px;width:135.62px;top:812.2px;">bj01</div>
<div class="a td c" style="left:1003.62px;width:135.62px;top:812.2px;">7</div>
<div class="a td c" style="left:1184.45px;width:135.62px;top:812.2px;">10</div>
<div class="a td c" style="left:1365.28px;width:135.62px;top:812.2px;">仓库1</div>
<!--TEXT3_END-->
</div>
</body></html>
